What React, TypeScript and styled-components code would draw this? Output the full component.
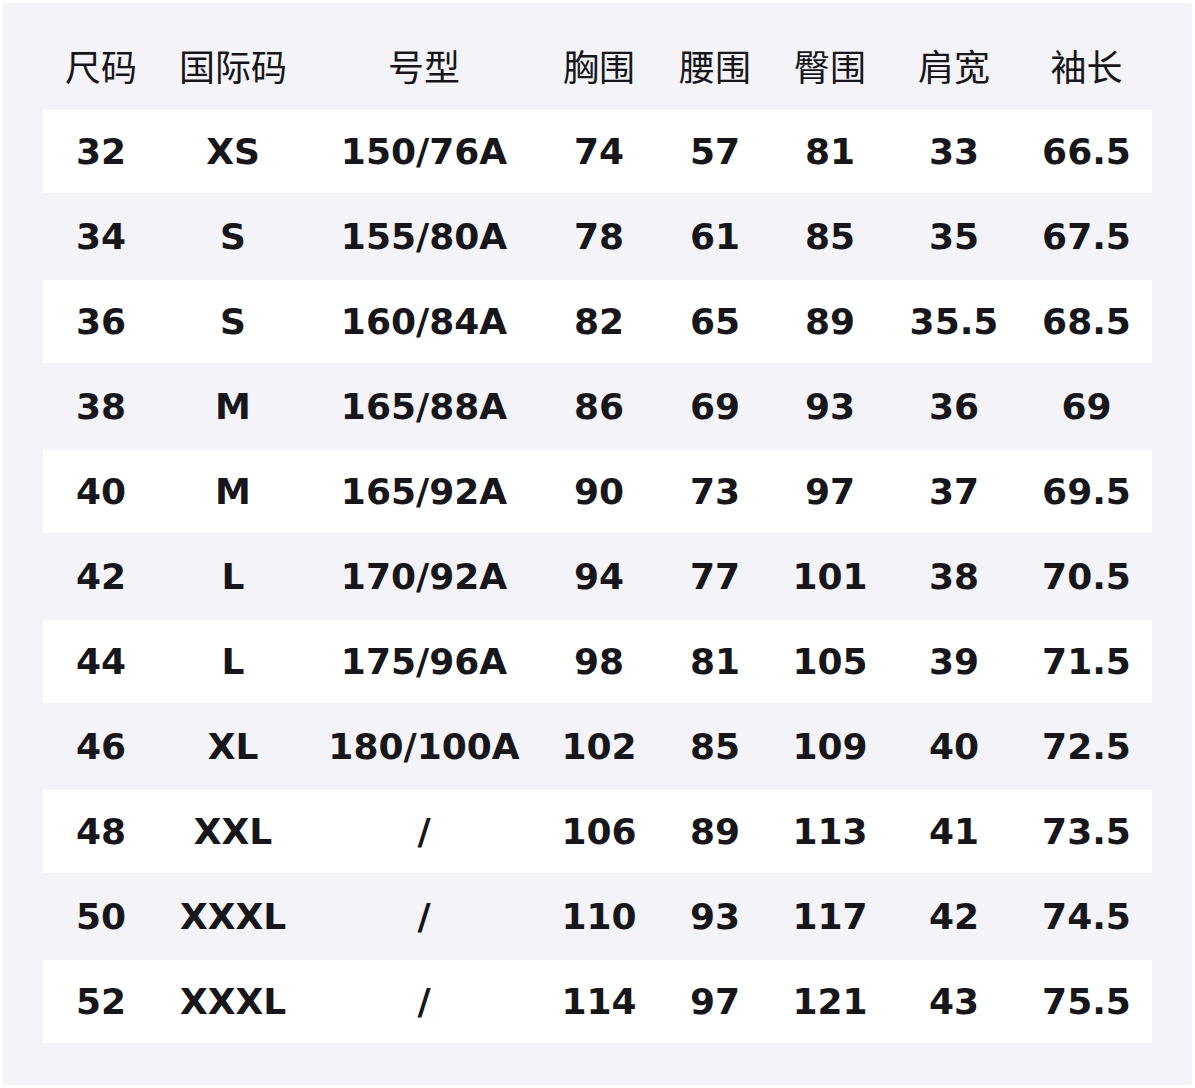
import React from 'react';
import { createGlobalStyle, styled } from 'styled-components';

const GlobalStyle = createGlobalStyle`
  html, body {
    margin: 0;
    padding: 0;
    background: #ffffff;
  }
  body {
    font-family: 'DejaVu Sans', 'Noto Sans CJK SC', sans-serif;
    color: #17161b;
  }
`;

const Page = styled.div`
  padding: 3px;
`;

const Panel = styled.div`
  width: 1189px;
  height: 1082px;
  box-sizing: border-box;
  background: #f3f3f8;
  padding: 21px 40px 0 40px;
`;

const COLUMNS = '116px 148px 234px 116px 116px 114px 134px 131px';

const HeadRow = styled.div`
  display: grid;
  grid-template-columns: ${COLUMNS};
  height: 85px;
  align-items: center;
`;

const HeadCell = styled.div`
  text-align: center;
  font-family: 'DejaVu Sans', 'Noto Sans CJK SC', sans-serif;
  font-size: 36px;
  font-weight: 400;
  white-space: nowrap;
  padding-bottom: 4px;
`;

const Row = styled.div<{ $white: boolean }>`
  display: grid;
  grid-template-columns: ${COLUMNS};
  height: 85px;
  box-sizing: border-box;
  align-items: center;
  border-top: 1px solid transparent;
  border-bottom: 1px solid transparent;
  background-clip: padding-box;
  background-color: ${(p) => (p.$white ? '#ffffff' : 'transparent')};
`;

const Cell = styled.div`
  text-align: center;
  font-size: 36px;
  font-weight: 700;
  white-space: nowrap;
`;

const headers = ['尺码', '国际码', '号型', '胸围', '腰围', '臀围', '肩宽', '袖长'];

const rows: string[][] = [
  ['32', 'XS', '150/76A', '74', '57', '81', '33', '66.5'],
  ['34', 'S', '155/80A', '78', '61', '85', '35', '67.5'],
  ['36', 'S', '160/84A', '82', '65', '89', '35.5', '68.5'],
  ['38', 'M', '165/88A', '86', '69', '93', '36', '69'],
  ['40', 'M', '165/92A', '90', '73', '97', '37', '69.5'],
  ['42', 'L', '170/92A', '94', '77', '101', '38', '70.5'],
  ['44', 'L', '175/96A', '98', '81', '105', '39', '71.5'],
  ['46', 'XL', '180/100A', '102', '85', '109', '40', '72.5'],
  ['48', 'XXL', '/', '106', '89', '113', '41', '73.5'],
  ['50', 'XXXL', '/', '110', '93', '117', '42', '74.5'],
  ['52', 'XXXL', '/', '114', '97', '121', '43', '75.5'],
];

const App = () => (
  <Page>
    <GlobalStyle />
    <Panel>
      <HeadRow>
        {headers.map((h) => (
          <HeadCell key={h}>{h}</HeadCell>
        ))}
      </HeadRow>
      {rows.map((r, i) => (
        <Row key={r[0]} $white={i % 2 === 0}>
          {r.map((v, j) => (
            <Cell key={j}>{v}</Cell>
          ))}
        </Row>
      ))}
    </Panel>
  </Page>
);

export default App;
